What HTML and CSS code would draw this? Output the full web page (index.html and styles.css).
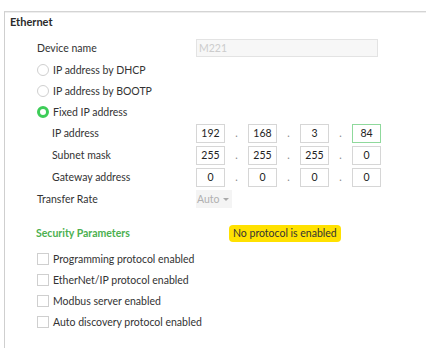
FILE: index.html
```html
<!DOCTYPE html>
<html>
<head>
<meta charset="utf-8">
<link rel="stylesheet" href="styles.css">
</head>
<body>
<div class="panel">
  <div class="title">Ethernet</div>
  <div class="row row-device">
    <span class="label">Device name</span>
    <span class="field field-disabled">M221</span>
  </div>
  <div class="row row-radio">
    <span class="radio"></span><span class="rtext">IP address by DHCP</span>
  </div>
  <div class="row row-radio">
    <span class="radio"></span><span class="rtext">IP address by BOOTP</span>
  </div>
  <div class="row row-radio">
    <span class="radio radio-on"></span><span class="rtext">Fixed IP address</span>
  </div>
  <div class="row row-ip">
    <span class="label label-sub">IP address</span>
    <div class="octets">
      <span class="oct">192</span><span class="dot">.</span>
      <span class="oct">168</span><span class="dot">.</span>
      <span class="oct">3</span><span class="dot">.</span>
      <span class="oct oct-focus">84</span>
    </div>
  </div>
  <div class="row row-ip">
    <span class="label label-sub">Subnet mask</span>
    <div class="octets">
      <span class="oct">255</span><span class="dot">.</span>
      <span class="oct">255</span><span class="dot">.</span>
      <span class="oct">255</span><span class="dot">.</span>
      <span class="oct">0</span>
    </div>
  </div>
  <div class="row row-ip">
    <span class="label label-sub">Gateway address</span>
    <div class="octets">
      <span class="oct">0</span><span class="dot">.</span>
      <span class="oct">0</span><span class="dot">.</span>
      <span class="oct">0</span><span class="dot">.</span>
      <span class="oct">0</span>
    </div>
  </div>
  <div class="row row-ip">
    <span class="label">Transfer Rate</span>
    <span class="combo">Auto <span class="caret"></span></span>
  </div>
  <div class="row row-sec">
    <span class="label sec-title">Security Parameters</span>
    <span class="badge">No protocol is enabled</span>
  </div>
  <div class="checks">
    <div class="row row-check"><span class="check"></span><span class="rtext">Programming protocol enabled</span></div>
    <div class="row row-check"><span class="check"></span><span class="rtext">EtherNet/IP protocol enabled</span></div>
    <div class="row row-check"><span class="check"></span><span class="rtext">Modbus server enabled</span></div>
    <div class="row row-check"><span class="check"></span><span class="rtext">Auto discovery protocol enabled</span></div>
  </div>
</div>
</body>
</html>
```
FILE: styles.css
```css
html, body {
  margin: 0;
  padding: 0;
  background: #ffffff;
}
body {
  font-family: Lato, "Noto Sans", sans-serif;
  font-size: 10.5px;
  color: #333333;
  height: 348px;
  overflow: hidden;
}
.panel {
  margin-top: 11px;
  margin-left: 4px;
  border-top: 1px solid #d4d4d4;
  box-shadow: inset 0 1px 0 #eeeeee;
  border-left: 1px solid #cfcfcf;
  height: 340px;
  padding-left: 0;
}
.title {
  height: 20px;
  line-height: 20px;
  padding-left: 5px;
  font-weight: bold;
  font-size: 11px;
  color: #2b2b2b;
  margin-bottom: 5px;
}
.row {
  display: flex;
  align-items: center;
  padding-left: 32px;
}
.row-device { height: 22px; }
.row-radio { height: 21px; }
.row-ip { height: 22px; }
.label {
  width: 159px;
  flex: none;
}
.label-sub {
  width: 144px;
  padding-left: 15px;
}
.field {
  width: 178px;
  height: 16px;
  line-height: 16px;
  box-sizing: content-box;
  border: 1px solid #e3e3e3;
  padding-left: 2px;
}
.field-disabled {
  background: #f7f7f7;
  color: #cccccc;
}
.radio {
  width: 10px;
  height: 10px;
  border: 1px solid #cfcfcf;
  border-radius: 50%;
  margin-right: 4px;
  flex: none;
}
.radio-on {
  width: 6px;
  height: 6px;
  border: 3px solid #3dcd58;
}
.octets {
  display: flex;
  align-items: center;
}
.oct {
  width: 27px;
  height: 17px;
  line-height: 17px;
  border: 1px solid #d6d6d6;
  text-align: center;
  color: #222;
}
.oct-focus {
  border-color: #8fd99c;
}
.dot {
  width: 23px;
  text-align: center;
  color: #888;
}
.combo {
  width: 36px;
  height: 18px;
  line-height: 18px;
  background: #f4f4f4;
  color: #b0b0b0;
  padding-left: 1px;
  box-sizing: border-box;
  display: flex;
  align-items: center;
  gap: 3px;
}
.caret {
  width: 0;
  height: 0;
  border-left: 3px solid transparent;
  border-right: 3px solid transparent;
  border-top: 3px solid #aaaaaa;
}
.row-sec {
  height: 22px;
  margin-top: 12px;
  padding-left: 31px;
}
.sec-title {
  width: 193px;
  font-weight: bold;
  color: #4bb04f;
}
.badge {
  background: #ffe100;
  border-radius: 4px;
  padding: 0 4px;
  height: 17px;
  line-height: 17px;
  color: #333;
}
.checks {
  margin-top: 4px;
}
.row-check { height: 21px; }
.check {
  width: 10px;
  height: 10px;
  border: 1px solid #cfcfcf;
  margin-right: 4px;
  flex: none;
}
.rtext { white-space: nowrap; }
```
